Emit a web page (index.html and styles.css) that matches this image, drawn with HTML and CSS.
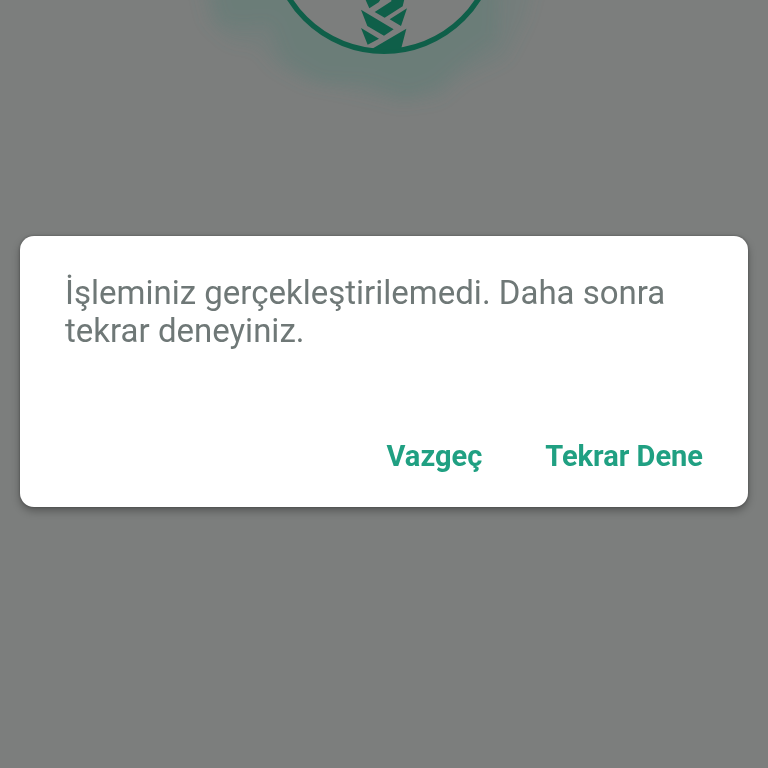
FILE: index.html
```html
<!DOCTYPE html>
<html lang="tr">
<head>
    <meta charset="UTF-8">
    <meta name="viewport" content="width=device-width, initial-scale=1.0">
    <title>İşlem Hatası</title>
    <link rel="stylesheet" href="styles.css">
</head>
<body>
    <header class="brand">
        <svg class="logo" viewBox="12 0 1200 390" aria-hidden="true">
            <defs>
                <filter id="soft" x="-20%" y="-30%" width="140%" height="160%">
                    <feGaussianBlur stdDeviation="22"/>
                </filter>
            </defs>
            <!-- watercolour stain -->
            <g filter="url(#soft)">
                <path class="stain pale" d="M50 -60 L80 70 L150 130 L230 140 L280 200 L370 250 L540 285 L660 315 L780 300 L850 240 L980 180 L1040 60 L1070 -60Z"/>
                <path class="stain" d="M90 -60 L120 70 L190 80 L270 70 L310 180 L420 245 L560 250 L680 290 L770 260 L850 190 L950 120 L960 -60Z"/>
            </g>
            <circle class="ring" cx="612" cy="-180" r="334"/>
            <!-- palm trunk -->
            <path class="trunk" d="M556 -2H602L596 7L568 25ZM634 -2H673L668 19L614 53L584 36L634 4ZM681 25L663 78L629 58ZM543 29L641 88L612 107L562 78ZM543 84L597 116L563 134ZM679 86L663 148H574Z"/>
        </svg>
    </header>

    <div class="overlay">
        <div class="dialog" role="alertdialog" aria-modal="true" aria-labelledby="message">
            <p class="message" id="message">İşleminiz gerçekleştirilemedi. Daha sonra tekrar deneyiniz.</p>
            <div class="actions">
                <button type="button">Vazgeç</button>
                <button type="button">Tekrar Dene</button>
            </div>
        </div>
    </div>
</body>
</html>
```
FILE: styles.css
```css
* {
    box-sizing: border-box;
}
body {
    margin: 0;
    min-height: 100vh;
    background-color: #7c7e7d;
    font-family: Roboto, sans-serif;
}
.brand {
    display: flex;
    justify-content: center;
}
.logo {
    width: 400px;
    height: 130px;
    overflow: visible;
}
.stain {
    fill: #4f7a70;
    opacity: 0.24;
}
.pale {
    opacity: 0.16;
}
.ring {
    fill: #7c7e7d;
    stroke: #0f5f49;
    stroke-width: 16;
}
.trunk {
    fill: #0f5f49;
}
.overlay {
    position: fixed;
    inset: 0;
    display: flex;
    align-items: center;
    padding: 0 20px 25px;
}
.dialog {
    width: 100%;
    padding: 38px 45px 30px;
    background-color: white;
    border-radius: 14px;
    box-shadow: 0 4px 8px rgba(0, 0, 0, 0.3), 0 0 3px rgba(0, 0, 0, 0.3);
}
.message {
    margin: 0;
    color: #6f7877;
    font-size: 33px;
    line-height: 38px;
}
.actions {
    display: flex;
    justify-content: flex-end;
    gap: 63px;
    margin-top: 85px;
}
button {
    padding: 4px 0;
    background: none;
    border: none;
    color: #20a082;
    font-family: inherit;
    font-size: 29px;
    font-weight: bold;
    line-height: 34px;
    cursor: pointer;
}
```
